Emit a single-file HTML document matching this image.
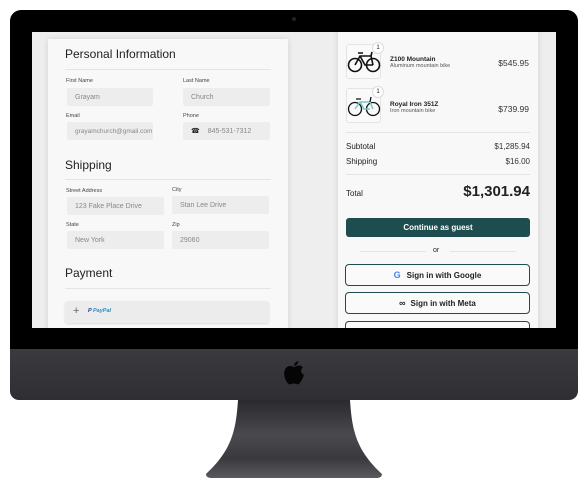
<!DOCTYPE html>
<html><head><meta charset="utf-8"><style>
*{margin:0;padding:0;box-sizing:border-box}
body{width:588px;height:490px;background:#fff;position:relative;overflow:hidden;font-family:"Liberation Sans",sans-serif}
.a{position:absolute}
.body{left:10px;top:10px;width:568px;height:340px;background:#000;border-radius:11px 11px 0 0}
.chin{left:10px;top:349px;width:568px;height:51px;background:linear-gradient(#3a3a3f,#2e2e33);border-radius:0 0 9px 9px}
.screen{left:32px;top:32px;width:524px;height:296px;background:#eeeeee;overflow:hidden}
.card{background:#f8f8f8;box-shadow:0 0 6px rgba(0,0,0,.12)}
.t{font-size:11px;color:#222;white-space:nowrap}
.h{font-size:12px;color:#222}
.l{font-size:5.5px;color:#444}
.in{background:#ededed;border-radius:2px;font-size:7px;color:#888;padding-left:8px;display:flex;align-items:center}
.hr{height:1px;background:#e4e4e4}
.img{width:35px;height:35px;border:1px solid #e4e4e4;border-radius:3px;background:#fafafa}
.badge{width:12px;height:12px;border-radius:50%;border:1px solid #ddd;background:#fff;font-size:6px;text-align:center;line-height:10px;color:#222}
.btn{border:1.5px solid #1e4d4f;border-radius:4px;font-size:8px;font-weight:bold;color:#222;display:flex;align-items:center;justify-content:center;background:#fafafa}
</style></head><body>
<div class="a body"></div>
<div class="a" style="left:292px;top:17px;width:4px;height:4px;border-radius:50%;background:#222"></div>
<div class="a screen">
 <div class="a card" style="left:16px;top:7px;width:240px;height:300px"></div>
 <div class="a card" style="left:306px;top:-5px;width:200px;height:310px"></div>
</div>
<div class="a" style="left:32px;top:32px;width:524px;height:296px;overflow:hidden">
<div style="position:absolute;left:-32px;top:-32px;width:588px;height:400px">
 <div class="a h" style="left:65px;top:47px">Personal Information</div>
 <div class="a hr" style="left:65px;top:69px;width:206px"></div>
 <div class="a l" style="left:66px;top:78px">First Name</div>
 <div class="a l" style="left:183px;top:78px">Last Name</div>
 <div class="a in" style="left:67px;top:88px;width:86px;height:18px">Grayam</div>
 <div class="a in" style="left:183px;top:88px;width:87px;height:18px">Church</div>
 <div class="a l" style="left:66px;top:113px">Email</div>
 <div class="a l" style="left:183px;top:113px">Phone</div>
 <div class="a in" style="left:67px;top:122px;width:86px;height:18px;font-size:6.5px">grayamchurch@gmail.com</div>
 <div class="a in" style="left:183px;top:122px;width:87px;height:18px"><span style="color:#222;font-size:7px;margin-right:8px">&#x260E;</span>845-531-7312</div>
 <div class="a h" style="left:65px;top:158px">Shipping</div>
 <div class="a hr" style="left:65px;top:179px;width:206px"></div>
 <div class="a l" style="left:66px;top:188px">Street Address</div>
 <div class="a l" style="left:172px;top:187px">City</div>
 <div class="a in" style="left:67px;top:197px;width:97px;height:18px">123 Fake Place Drive</div>
 <div class="a in" style="left:172px;top:196px;width:97px;height:18px">Stan Lee Drive</div>
 <div class="a l" style="left:66px;top:222px">State</div>
 <div class="a l" style="left:172px;top:222px">Zip</div>
 <div class="a in" style="left:67px;top:231px;width:97px;height:18px">New York</div>
 <div class="a in" style="left:172px;top:231px;width:97px;height:18px">29060</div>
 <div class="a h" style="left:65px;top:266px">Payment</div>
 <div class="a hr" style="left:65px;top:288px;width:206px"></div>
 <div class="a" style="left:65px;top:301px;width:204px;height:22px;background:#ececec;border-radius:3px;box-shadow:0 1px 2px rgba(0,0,0,.12)"></div>
 <div class="a" style="left:73px;top:305px;font-size:11px;color:#666">+</div>
 <div class="a" style="left:88px;top:308px;font-size:5.5px;font-weight:bold;font-style:italic;color:#1e3c8c">P <span style="color:#2790c3">PayPal</span></div>

 <div class="a img" style="left:346px;top:44px"></div>
 <div class="a badge" style="left:372px;top:42px">1</div>
 <svg class="a" style="left:347px;top:50px" width="34" height="24" viewBox="0 0 34 24" fill="none" stroke="#111" stroke-width="1.6"><circle cx="8" cy="15" r="6.5"/><circle cx="26" cy="15" r="6.5"/><path d="M8 15L13 6H24L26 15M13 6L18 15H26M24 6L25 2M11 3H16"/></svg>
 <div class="a" style="left:390px;top:56px;font-size:6.5px;font-weight:bold;color:#222">Z100 Mountain</div>
 <div class="a" style="left:390px;top:63px;font-size:5.5px;color:#555">Aluminum mountain bike</div>
 <div class="a t" style="right:59px;top:58px;font-size:8.5px;color:#333">$545.95</div>
 <div class="a img" style="left:346px;top:88px"></div>
 <div class="a badge" style="left:372px;top:86px">1</div>
 <svg class="a" style="left:347px;top:94px" width="34" height="24" viewBox="0 0 34 24" fill="none" stroke="#111" stroke-width="1.3"><circle cx="8" cy="15" r="6.5"/><circle cx="26" cy="15" r="6.5"/><path d="M8 15L13 8H23L26 15M13 8L17 15H23" stroke="#7cc8c8" stroke-width="1.5"/><path d="M23 8L24 3M9 5H14"/></svg>
 <div class="a" style="left:390px;top:101px;font-size:6.5px;font-weight:bold;color:#222">Royal Iron 351Z</div>
 <div class="a" style="left:390px;top:108px;font-size:5.5px;color:#555">Iron mountain bike</div>
 <div class="a t" style="right:59px;top:104px;font-size:8.5px;color:#333">$739.99</div>
 <div class="a hr" style="left:346px;top:132px;width:184px"></div>
 <div class="a" style="left:346px;top:142px;font-size:8px;color:#222">Subtotal</div>
 <div class="a t" style="right:58px;top:142px;font-size:8px;color:#333">$1,285.94</div>
 <div class="a" style="left:346px;top:157px;font-size:8px;color:#222">Shipping</div>
 <div class="a t" style="right:58px;top:157px;font-size:8px;color:#333">$16.00</div>
 <div class="a hr" style="left:346px;top:174px;width:184px"></div>
 <div class="a" style="left:346px;top:189px;font-size:8px;color:#222">Total</div>
 <div class="a t" style="right:58px;top:183px;font-size:15px;font-weight:bold;color:#222">$1,301.94</div>
 <div class="a" style="left:346px;top:218px;width:184px;height:19px;background:#1e4d4f;border-radius:3px;color:#fff;font-size:8px;font-weight:bold;display:flex;align-items:center;justify-content:center">Continue as guest</div>
 <div class="a hr" style="left:360px;top:251px;width:66px"></div>
 <div class="a hr" style="left:450px;top:251px;width:66px"></div>
 <div class="a" style="left:433px;top:247px;font-size:7px;color:#222">or</div>
 <div class="a btn" style="left:345px;top:264px;width:185px;height:22px"><span style="color:#4285f4;font-size:9px;margin-right:6px">G</span>Sign in with Google</div>
 <div class="a btn" style="left:345px;top:292px;width:185px;height:22px"><span style="font-size:9px;margin-right:5px">&#x221E;</span>Sign in with Meta</div>
 <div class="a btn" style="left:345px;top:321px;width:185px;height:22px"></div>
</div></div>
<div class="a chin"></div>
<svg class="a" style="left:283px;top:361px" width="22" height="24" viewBox="0 0 22 24"><path d="M11 6C12 6 14 4.5 16 4.5C17.5 4.5 19 5.3 20 6.6C17.2 8.2 17.5 12.5 21 13.8C20.2 16.5 18.5 20 16.5 22.5C15.3 23.7 14 23.3 12.5 22.8C11.2 22.4 10 22.4 8.5 23C7 23.6 6 23.6 5 22.5C2 19 -0.5 12 2.5 7.7C4 5.4 6.5 4.6 8 5C9.3 5.4 10.2 6 11 6Z M11 4.8C11.2 2.5 13 0.5 15.2 0C15.4 2.4 13.6 4.7 11 4.8Z" fill="#050505"/></svg>
<svg class="a" style="left:206px;top:400px" width="176" height="82" viewBox="0 0 176 82"><defs><linearGradient id="g" x1="0" y1="0" x2="0" y2="1"><stop offset="0" stop-color="#2a2a2e"/><stop offset=".45" stop-color="#4a494e"/><stop offset=".75" stop-color="#3a393e"/><stop offset="1" stop-color="#5a595e"/></linearGradient></defs><path d="M32 0H144C146 30 150 50 176 74Q176 78 170 78H6Q0 78 0 74C26 50 30 30 32 0Z" fill="url(#g)"/></svg>
</body></html>
